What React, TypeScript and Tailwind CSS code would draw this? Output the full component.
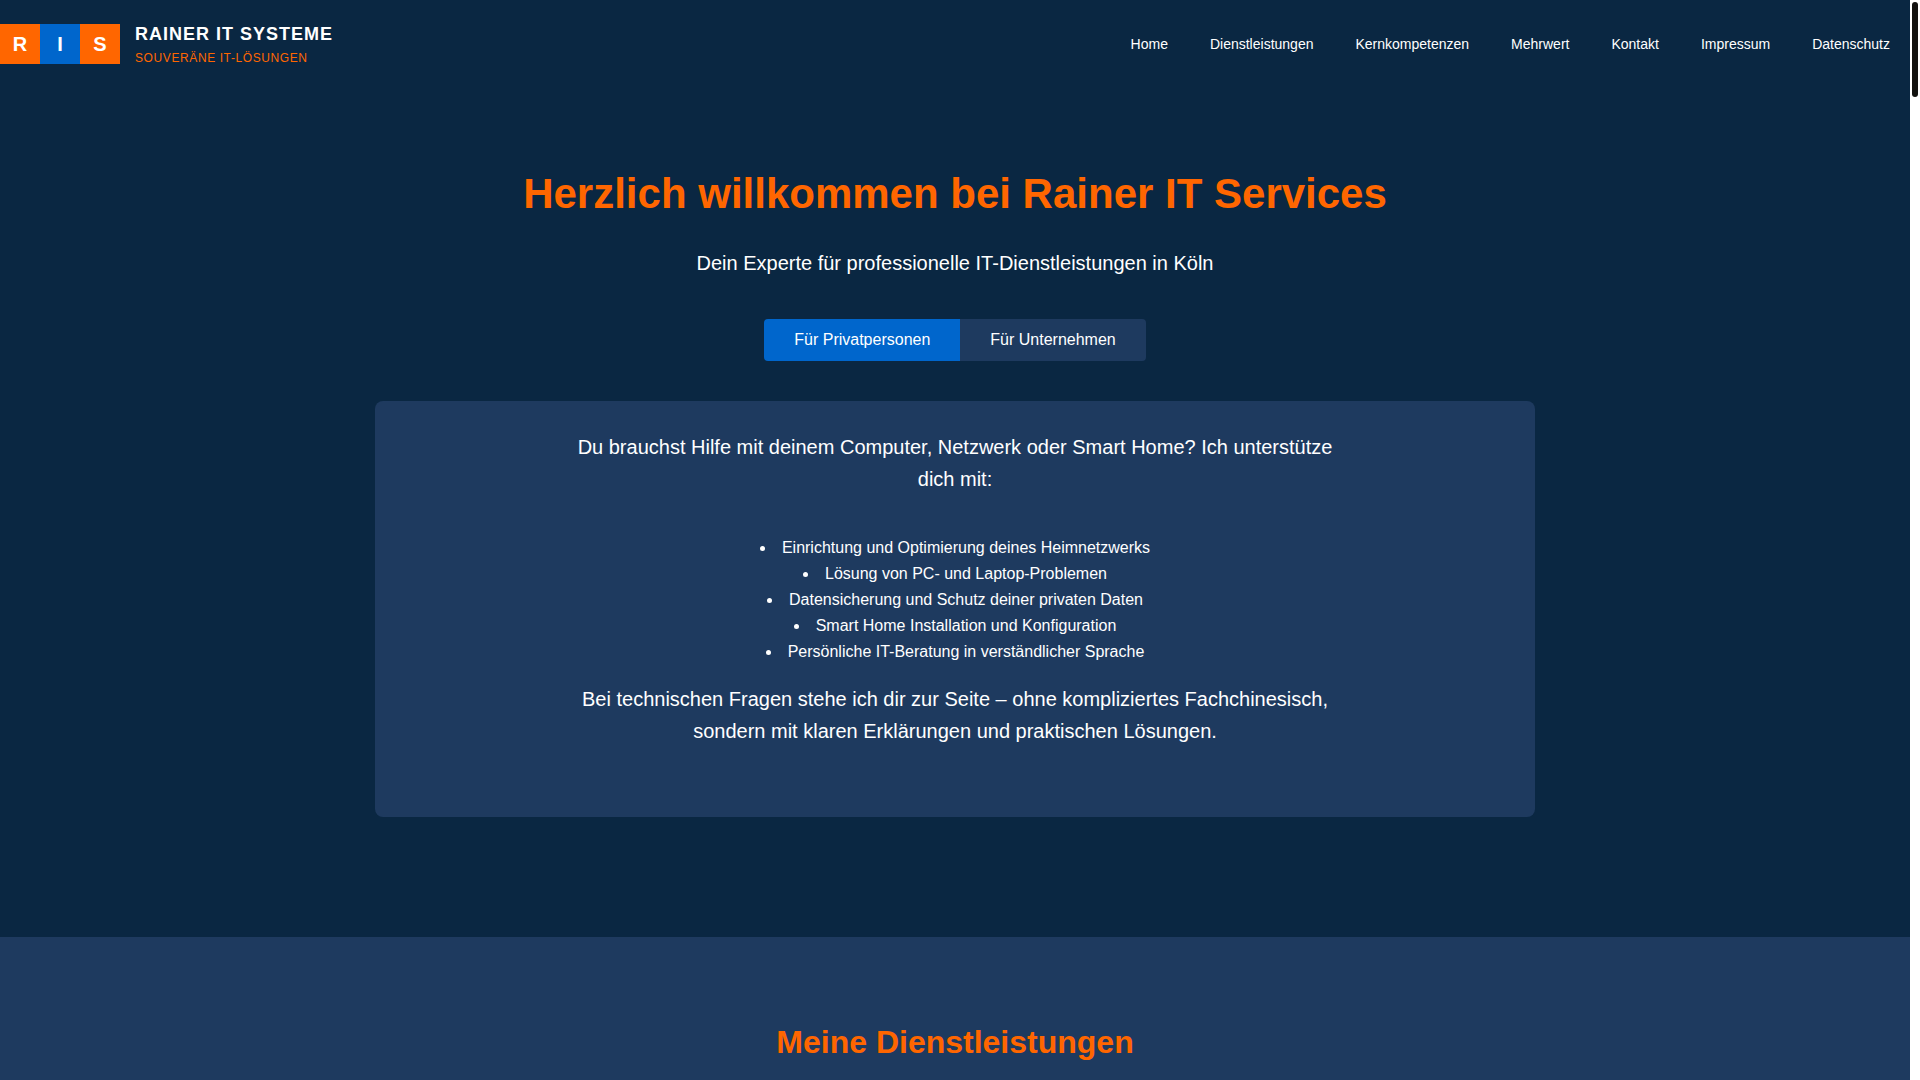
import { useState } from 'react';

type Audience = 'private' | 'business';

const navLinks = [
  { label: 'Home', href: '#home' },
  { label: 'Dienstleistungen', href: '#dienstleistungen' },
  { label: 'Kernkompetenzen', href: '#kernkompetenzen' },
  { label: 'Mehrwert', href: '#mehrwert' },
  { label: 'Kontakt', href: '#kontakt' },
  { label: 'Impressum', href: '#impressum' },
  { label: 'Datenschutz', href: '#datenschutz' },
];

const privateServices = [
  'Einrichtung und Optimierung deines Heimnetzwerks',
  'Lösung von PC- und Laptop-Problemen',
  'Datensicherung und Schutz deiner privaten Daten',
  'Smart Home Installation und Konfiguration',
  'Persönliche IT-Beratung in verständlicher Sprache',
];

function Logo() {
  return (
    <a href="#home" className="flex items-center gap-[15px]">
      <span className="flex text-xl font-bold">
        <span className="flex size-10 items-center justify-center bg-[#ff6600]">R</span>
        <span className="flex size-10 items-center justify-center bg-[#0066cc]">I</span>
        <span className="flex size-10 items-center justify-center bg-[#ff6600]">S</span>
      </span>
      <span className="flex flex-col uppercase">
        <span className="text-lg leading-[29px] font-bold tracking-[1px]">Rainer IT Systeme</span>
        <span className="text-xs leading-[19px] tracking-wider text-[#ff6600]">Souveräne IT-Lösungen</span>
      </span>
    </a>
  );
}

function Header() {
  return (
    <header className="flex h-22 items-center justify-between pr-5">
      <Logo />
      <nav className="flex gap-[42px] text-sm">
        {navLinks.map((link) => (
          <a key={link.href} href={link.href} className="hover:text-[#ff6600]">
            {link.label}
          </a>
        ))}
      </nav>
    </header>
  );
}

function Hero() {
  const [audience, setAudience] = useState<Audience>('private');

  const tabClass = (value: Audience) =>
    `px-[30px] py-3 leading-[18px] ${audience === value ? 'bg-[#0066cc]' : 'bg-[#1e3a5f]'}`;

  return (
    <section id="home" className="mx-auto max-w-[1200px] px-5 pt-18 pb-30 text-center">
      <h1 className="mb-5 text-[42px] leading-[67px] font-bold text-[#ff6600]">
        Herzlich willkommen bei Rainer IT Services
      </h1>
      <p className="mb-10 text-xl leading-8">Dein Experte für professionelle IT-Dienstleistungen in Köln</p>

      <div className="mb-10 flex justify-center">
        <button type="button" onClick={() => setAudience('private')} className={`rounded-l ${tabClass('private')}`}>
          Für Privatpersonen
        </button>
        <button type="button" onClick={() => setAudience('business')} className={`rounded-r ${tabClass('business')}`}>
          Für Unternehmen
        </button>
      </div>

      <div className="rounded-lg bg-[#1e3a5f] p-[30px]">
        <p className="mx-auto mb-10 max-w-[780px] text-xl leading-8">
          Du brauchst Hilfe mit deinem Computer, Netzwerk oder Smart Home? Ich unterstütze dich mit:
        </p>
        <ul className="mb-[18px] list-inside list-disc leading-[26px]">
          {privateServices.map((service) => (
            <li key={service}>{service}</li>
          ))}
        </ul>
        <p className="mx-auto mb-10 max-w-[780px] text-xl leading-8">
          Bei technischen Fragen stehe ich dir zur Seite – ohne kompliziertes Fachchinesisch, sondern mit klaren
          Erklärungen und praktischen Lösungen.
        </p>
      </div>
    </section>
  );
}

export default function App() {
  return (
    <div className="flex h-screen overflow-hidden bg-[#0a2742] font-['Liberation_Sans',Arial,sans-serif] text-base text-white">
      <div className="min-w-0 flex-1 overflow-hidden">
        <Header />
        <main>
          <Hero />
          <section id="dienstleistungen" className="bg-[#1e3a5f] px-5 py-20 text-center">
            <h2 className="text-[32px] leading-[51px] font-bold text-[#ff6600]">Meine Dienstleistungen</h2>
          </section>
        </main>
      </div>

      {/* Scrollbar */}
      <div className="w-[10px] shrink-0 bg-white p-0.5" aria-hidden="true">
        <div className="h-[95px] rounded-full bg-[#12110f]" />
      </div>
    </div>
  );
}
